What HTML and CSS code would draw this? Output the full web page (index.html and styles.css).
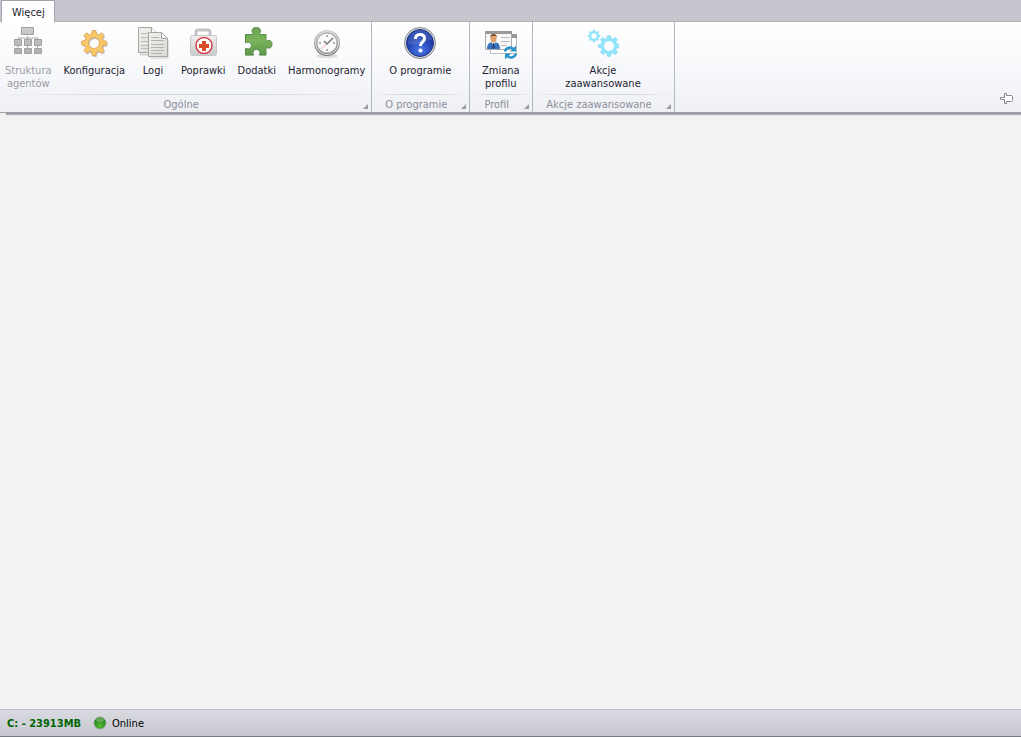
FILE: index.html
```html
<!DOCTYPE html>
<html lang="pl">
<head>
<meta charset="utf-8">
<title>Więcej</title>
<link rel="stylesheet" href="styles.css">
</head>
<body>
<svg class="defs" aria-hidden="true">
  <defs>
    <linearGradient id="grey" x2="0" y2="1"><stop offset="0" stop-color="#cdcdcd"/><stop offset="1" stop-color="#b0b0b0"/></linearGradient>
    <linearGradient id="paper" x2="1" y2="1"><stop offset="0" stop-color="#f2f2ef"/><stop offset="1" stop-color="#d9d9d5"/></linearGradient>
    <linearGradient id="case" x2="0" y2="1"><stop offset="0" stop-color="#f0f0f0"/><stop offset="1" stop-color="#c9c9c9"/></linearGradient>
    <linearGradient id="green" x2="0" y2="1"><stop offset="0" stop-color="#69a557"/><stop offset="0.5" stop-color="#7bb35a"/><stop offset="1" stop-color="#5c974b"/></linearGradient>
    <linearGradient id="steel" x2="0" y2="1"><stop offset="0" stop-color="#cfcfcf"/><stop offset="1" stop-color="#777"/></linearGradient>
    <radialGradient id="blue" cy="0.75"><stop offset="0" stop-color="#4d7aea"/><stop offset="1" stop-color="#1c3cab"/></radialGradient>
    <radialGradient id="led" cy="0.75"><stop offset="0" stop-color="#58c037"/><stop offset="1" stop-color="#2b8a20"/></radialGradient>
    <path id="gear" fill-rule="evenodd" stroke-linejoin="round" d="M-2.5-9-1.700-12.500H1.700L2.500-9 4.600-8.100 7.600-10.100 10.100-7.600 8.100-4.600 9-2.500 12.500-1.700V1.700L9 2.500 8.100 4.600 10.100 7.600 7.600 10.100 4.600 8.100 2.500 9 1.700 12.500H-1.700L-2.500 9-4.600 8.100-7.600 10.100-10.100 7.600-8.100 4.600-9 2.500-12.500 1.700V-1.700L-9-2.500-8.100-4.600-10.100-7.600-7.600-10.100-4.600-8.100ZM5.500 0A5.500 5.500 0 1 0-5.500 0 5.500 5.500 0 1 0 5.500 0Z"/>
    <path id="puzzle" d="M4.500 7.500h7c1.500 0-.5-2-.5-3.500 0-5 8.500-5 8.500 0 0 1.500-2 3.500-.5 3.500h6v5.500c0 2 1.500.5 3 .5 4 0 4 7.500 0 7.500-1.500 0-3-1.500-3 .5v6.500h-6c-1.500 0 0-1 0-2.500 0-4.500-7-4.500-7 0 0 1.500 1.500 2.500 0 2.500h-7.500v-6c0-1.500 1 0 2.500 0 4.500 0 4.500-7 0-7-1.500 0-2.500 1.500-2.500 0z"/>
  </defs>
</svg>

<div class="window">
  <nav class="tabs"><button class="tab">Więcej</button></nav>

  <main class="ribbon">
    <section class="group">
      <div class="tools">
        <button class="tool" disabled>
          <svg class="icon" viewBox="0 0 32 32"><path d="M15.500 9v4M6 13v-2h20v2M15.500 17v4M6 17v4M25.500 17v4" fill="none" stroke="#aaa"/><path d="M9.500.5h12v7h-12zM2.500 12.500h7v6h-7zM12.500 12.500h7v6h-7zM22.500 12.500h7v6h-7zM2.500 21.500h7v5h-7zM12.500 21.500h7v5h-7zM22.500 21.500h7v5h-7z" fill="url(#grey)" stroke="#a0a0a0"/></svg>
          <span>Struktura<br>agentów</span>
        </button>
        <button class="tool">
          <svg class="icon" viewBox="0 0 32 32"><use href="#gear" transform="translate(17 17.500)" fill="#c4c4c4"/><use href="#gear" transform="translate(16 16)" fill="#fbc869" stroke="#dcab60"/></svg>
          <span>Konfiguracja</span>
        </button>
        <button class="tool">
          <svg class="icon" viewBox="0 0 32 32"><path d="M3 27h10v1H3zM13 31h18V13" fill="none" stroke="#ccc"/><path d="M1.500.5h13l5 5v20h-18z" fill="url(#paper)" stroke="#a5a5a2"/><path d="M14.500.5v5h5" fill="#fff" stroke="#a5a5a2"/><path d="M4 6.500h8M4 10.500h8M4 14.500h8M4 18.500h8M4 21.500h8" stroke="#bcbcb8"/><path d="M11.500 5.500h13l6 6v18h-19z" fill="url(#paper)" stroke="#a5a5a2"/><path d="M24.500 5.500v6h6z" fill="#fff" stroke="#a5a5a2"/><path d="M14 10.500h8M14 13.500h13M14 17.500h13M14 20.500h13M14 23.500h13M14 26.500h11" stroke="#b2b2ae"/></svg>
          <span>Logi</span>
        </button>
        <button class="tool">
          <svg class="icon" viewBox="0 0 32 32"><path d="M9 9V5q0-2 2-2h10q2 0 2 2v4" fill="none" stroke="#c4c4c4" stroke-width="3"/><rect x="3.500" y="8.500" width="26" height="20" rx="2" fill="url(#case)" stroke="#c6c6c6"/><circle cx="17" cy="18.500" r="8" fill="#fff" stroke="#cf3f49" stroke-width="1.500"/><path d="M15 14h4v3h3v4h-3v3h-4v-3h-3v-4h3z" fill="#d94e27"/></svg>
          <span>Poprawki</span>
        </button>
        <button class="tool">
          <svg class="icon" viewBox="0 0 32 32"><use href="#puzzle" transform="translate(0 1)" fill="#aaa" opacity=".5"/><use href="#puzzle" fill="url(#green)" stroke="#5a9149"/></svg>
          <span>Dodatki</span>
        </button>
        <button class="tool">
          <svg class="icon" viewBox="0 0 32 32"><ellipse cx="16" cy="29" rx="11" ry="2" fill="#ddd"/><circle cx="16" cy="16" r="13" fill="url(#steel)"/><circle cx="16" cy="16" r="11.500" fill="none" stroke="#e6e6e6"/><circle cx="16" cy="16" r="10" fill="#fafafa" stroke="#aaa"/><path d="M16 8v2M16 22v2M8 16h2M22 16h2" stroke="#999" stroke-width="1.500"/><path d="M10 22l7-6" stroke="#f0a8a8"/><path d="M13 14l3 3 6-6" fill="none" stroke="#777" stroke-width="1.500"/></svg>
          <span>Harmonogramy</span>
        </button>
      </div>
      <footer class="caption">Ogólne<i class="corner"></i></footer>
    </section>

    <section class="group">
      <div class="tools">
        <button class="tool">
          <svg class="icon" viewBox="0 0 32 32"><circle cx="16" cy="16" r="15.500" fill="#ddd" stroke="#858995"/><circle cx="16" cy="16" r="13.500" fill="url(#blue)" stroke="#20367c"/><path d="M4 17a12 12 0 0 1 24-4q-9 0-13 3t-11 1z" fill="#fff" opacity=".13"/><path d="M11.500 12q0-4.500 4.500-4.500t4.500 4q0 2-2 3.500t-2 4" fill="none" stroke="#fff" stroke-width="3"/><circle cx="16.500" cy="23.500" r="2" fill="#fff"/></svg>
          <span>O programie</span>
        </button>
      </div>
      <footer class="caption">O programie<i class="corner"></i></footer>
    </section>

    <section class="group">
      <div class="tools">
        <button class="tool">
          <svg class="icon" viewBox="0 0 32 32"><path d="M5.500 7.500h26v19h-26z" fill="#fff" stroke="#bbb"/><path d="M27 7h5v4h-5z" fill="#999"/><path d="M.5 4.500h26v18H.5z" fill="#f8f8f8" stroke="#aaa"/><path d="M0 4h27v3H0z" fill="#999"/><path d="M16 10.500h9M16 14.500h9M16 18.500h6" stroke="#bbb"/><path d="M2 22q0-6 4-6.500h5q4 .5 4 6.500z" fill="#3b70bd"/><path d="M6.500 14h4l-2 6z" fill="#fff"/><path d="M8 16h1l1 4-1.500 2L7 20z" fill="#234a83"/><ellipse cx="8.500" cy="11.500" rx="3" ry="4" fill="#e0a26b"/><path d="M5 11q0-4 3.500-4t3.500 4l-1-2H6z" fill="#764c2b"/><path d="M20 24.500a5 5 0 0 1 8.500-2.500M31 26.500a5 5 0 0 1-8.500 2.500" fill="none" stroke="#2793cb" stroke-width="2.500"/><path d="M31 18.500v6h-6zM20 32.500v-6h6z" fill="#2793cb"/></svg>
          <span>Zmiana<br>profilu</span>
        </button>
      </div>
      <footer class="caption">Profil<i class="corner"></i></footer>
    </section>

    <section class="group">
      <div class="tools">
        <button class="tool">
          <svg class="icon" viewBox="0 0 32 32"><g fill="#91e6fd" stroke="#86daf5"><use href="#gear" transform="translate(7 9) scale(.48)"/><use href="#gear" transform="translate(22 19) scale(.83)"/></g><circle cx="7" cy="9" r="2.500" fill="#fff"/><circle cx="22" cy="19" r="5" fill="#fcfcfe"/></svg>
          <span>Akcje<br>zaawansowane</span>
        </button>
      </div>
      <footer class="caption">Akcje zaawansowane<i class="corner"></i></footer>
    </section>

    <button class="pin" aria-label="Przypnij"><svg width="14" height="12" viewBox="0 0 14 12"><path d="M.5 4.500h4v-4h2v2h5l1 1v4l-1 1h-5v2h-2v-4h-4z" fill="#fff" stroke="#85868f"/></svg></button>
  </main>
  <div class="shadow"></div>
  <div class="content"></div>

  <footer class="status">
    <strong class="disk">C: - 23913MB</strong>
    <svg width="14" height="14" viewBox="0 0 14 14"><circle cx="7" cy="7" r="6" fill="url(#led)" stroke="#8fa38f"/><ellipse cx="7" cy="4" rx="4" ry="2" fill="#fff" opacity=".25"/></svg>
    <span>Online</span>
  </footer>
</div>
</body>
</html>
```

FILE: styles.css
```css
* { box-sizing: border-box; }
body {
  margin: 0;
  font: 11px/13px "DejaVu Sans Condensed", "DejaVu Sans", sans-serif;
  color: #1e1e32;
}
button {
  margin: 0;
  padding: 0;
  border: 0;
  background: none;
  font: inherit;
  color: inherit;
}
.defs { position: absolute; width: 0; height: 0; }
.window {
  display: flex;
  flex-direction: column;
  min-height: 100vh;
  background: #f2f2f2;
}
.tabs {
  display: flex;
  height: 22px;
  padding-left: 1px;
  background: #c6c6cf;
  border-bottom: 1px solid #b0b1ba;
}
.tab {
  height: 22px;
  padding: 2px 9px 0 10px;
  background: #fff;
  border: 1px solid #a3a4ae;
  border-bottom: 0;
}
.ribbon {
  display: flex;
  background: linear-gradient(#fff, #f6f7fa 60%, #eef0f4);
}
.group {
  display: flex;
  flex-direction: column;
  min-width: 63px;
  border-right: 1px solid #b4b6bf;
}
.tools {
  display: flex;
  flex: 1;
  justify-content: center;
  align-items: flex-start;
  gap: 2px;
  min-height: 72px;
  padding: 5px 1px 0 0;
}
.tool {
  display: flex;
  flex-direction: column;
  align-items: center;
  gap: 5px;
  padding: 0 5px;
  white-space: nowrap;
}
.tool:disabled { color: #9c9ca6; }
.icon { display: block; width: 32px; height: 32px; }
.caption {
  position: relative;
  height: 18px;
  padding: 4px 22px 0 13px;
  text-align: center;
  white-space: nowrap;
  color: #8c8e9b;
  background: linear-gradient(90deg, transparent, #d5d7de 30%, #d5d7de 70%, transparent) top / 100% 1px no-repeat;
}
.corner {
  position: absolute;
  right: 3px;
  bottom: 3px;
  border-left: 5px solid transparent;
  border-bottom: 5px solid #9a9ba4;
}
.pin { align-self: flex-end; margin: 0 7px 7px auto; }
.pin svg { display: block; }
.shadow {
  height: 4px;
  padding-left: 6px;
  border-top: 1px solid #a0a1ab;
}
.shadow::before {
  content: "";
  display: block;
  height: 3px;
  background: linear-gradient(#8f909b 0 1px, #b4b4ba 1px 2px, #e2e2e4 2px);
}
.content { flex: 1; }
.status {
  display: flex;
  align-items: center;
  height: 28px;
  padding: 0 7px;
  background: linear-gradient(#dadbe1, #c6c7cf);
  border-top: 1px solid #bcbdc5;
  border-bottom: 1px solid #777982;
  color: #000;
}
.disk { margin-right: 12px; color: #006400; }
.status svg { margin-right: 5px; }
```
